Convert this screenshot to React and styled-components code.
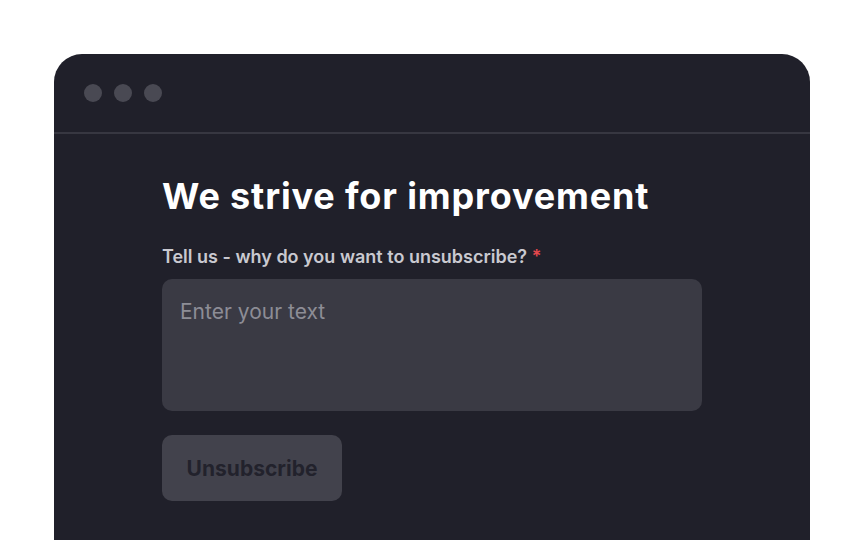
import React, { useState } from 'react'
import styled, { createGlobalStyle } from 'styled-components'

const GlobalStyle = createGlobalStyle`
  html, body {
    margin: 0;
    padding: 0;
    background: #ffffff;
    font-family: Inter, "Noto Sans", sans-serif;
  }
`

const Page = () => {
  const [reason, setReason] = useState("")

  return (
    <>
      <GlobalStyle />
      <Wrapper>
        <Window>
          <TitleBar>
            <Dot />
            <Dot />
            <Dot />
          </TitleBar>
          <Content>
            <Heading>We strive for improvement</Heading>
            <Label>
              Tell us - why do you want to unsubscribe? <Required>*</Required>
            </Label>
            <TextBox placeholder="Enter your text" value={reason} onChange={(e) => setReason(e.target.value)} />
            <Button disabled={!reason}>Unsubscribe</Button>
          </Content>
        </Window>
      </Wrapper>
    </>
  )
}

const Wrapper = styled.div`
  width: 864px;
  height: 540px;
  overflow: hidden;
  padding: 54px 54px 0 54px;
  box-sizing: border-box;
`

const Window = styled.div`
  background: #20202a;
  border-radius: 28px 28px 0 0;
  height: 100%;
  display: flex;
  flex-direction: column;
`

const TitleBar = styled.div`
  height: 78px;
  border-bottom: 2px solid #373741;
  display: flex;
  align-items: center;
  gap: 12px;
  padding: 0 0 0 30px;
  box-sizing: content-box;
`

const Dot = styled.span`
  width: 18px;
  height: 18px;
  border-radius: 50%;
  background: #494953;
`

const Content = styled.div`
  padding: 40px 108px 0 108px;
  display: flex;
  flex-direction: column;
  align-items: flex-start;
`

const Heading = styled.h1`
  margin: 0;
  color: #ffffff;
  font-size: 36px;
  font-weight: 700;
  letter-spacing: 0.85px;
  line-height: 44px;
`

const Label = styled.label`
  margin-top: 28px;
  color: #c9c9d0;
  font-size: 18px;
  font-weight: 600;
  line-height: 22px;
`

const Required = styled.span`
  color: #e5484d;
`

const TextBox = styled.textarea`
  margin-top: 11px;
  width: 540px;
  height: 132px;
  box-sizing: border-box;
  background: #3a3a44;
  border: none;
  outline: none;
  border-radius: 10px;
  padding: 20px 18px;
  resize: none;
  font-family: Inter, "Noto Sans", sans-serif;
  font-size: 21px;
  color: #e6e6ea;

  &::placeholder {
    color: #8d8d96;
  }
`

const Button = styled.button`
  margin-top: 24px;
  width: 180px;
  height: 66px;
  border: none;
  border-radius: 10px;
  background: #42424c;
  color: #22222c;
  font-family: Inter, "Noto Sans", sans-serif;
  font-size: 21px;
  font-weight: 700;
`

export default Page
